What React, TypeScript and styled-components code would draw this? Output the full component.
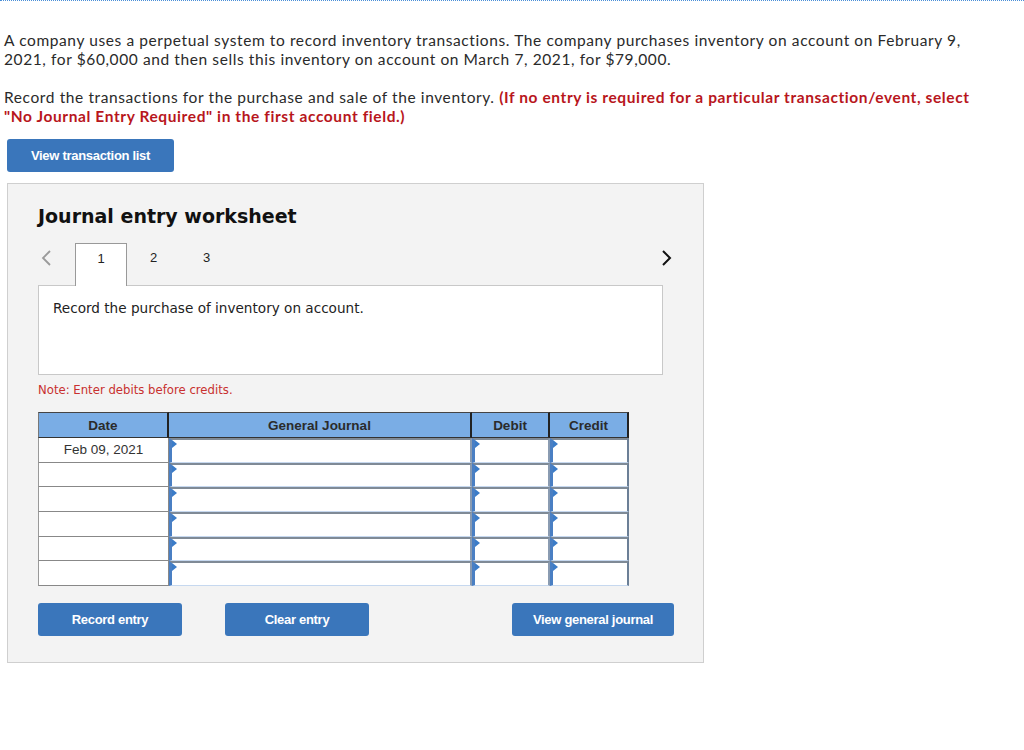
import React from "react";
import styled, { createGlobalStyle } from "styled-components";

const Global = createGlobalStyle`
  html, body { margin: 0; padding: 0; background: #fff; }
  body { font-family: "Liberation Sans", Arial, sans-serif; }
`;

const Page = styled.div`
  border-top: 1px dotted #4a8fd8;
  padding: 30px 4px 0 4px;
  width: 1016px;
`;

const Para = styled.p`
  margin: 0 0 19px 0;
  max-width: 972px;
  font-family: "Lato", "Open Sans", sans-serif;
  font-size: 15.5px;
  line-height: 19px;
  color: #2a2a2a;
  letter-spacing: 0.6px;
`;

const Plain = styled.span``;

const Red = styled.b`
  color: #b8161c;
  font-weight: 700;
`;

const Btn = styled.button<{ $w: number }>`
  width: ${(p) => p.$w}px;
  height: 33px;
  background: #3a76bb;
  color: #fff;
  border: none;
  border-radius: 3px;
  font-family: "Liberation Sans", Arial, sans-serif;
  font-weight: 700;
  font-size: 13px;
  letter-spacing: -0.3px;
  padding: 0;
  cursor: pointer;
`;

const TopBtnWrap = styled.div`
  padding-left: 3px;
  margin-top: -6px;
`;

const Panel = styled.div`
  margin: 11px 0 0 3px;
  width: 697px;
  height: 480px;
  background: #f3f3f3;
  border: 1px solid #cfcfcf;
  padding: 0 30px;
  box-sizing: border-box;
`;

const Title = styled.h2`
  margin: 0;
  padding-top: 20px;
  font-family: "DejaVu Sans", Verdana, sans-serif;
  font-weight: 700;
  font-size: 19px;
  line-height: 24px;
  color: #111;
`;

const TabBar = styled.div`
  display: flex;
  align-items: flex-end;
  margin-top: 15px;
  height: 43px;
  position: relative;
  z-index: 1;
`;

const Arrow = styled.div<{ $right?: boolean }>`
  width: 37px;
  height: 43px;
  box-sizing: border-box;
  display: flex;
  align-items: flex-start;
  padding-top: 6px;
  justify-content: ${(p) => (p.$right ? "flex-end" : "flex-start")};
  padding-left: ${(p) => (p.$right ? 0 : 2)}px;
`;

const Tab = styled.div<{ $active?: boolean }>`
  width: ${(p) => (p.$active ? 52 : 53)}px;
  height: ${(p) => (p.$active ? 43 : 42)}px;
  box-sizing: border-box;
  display: flex;
  justify-content: center;
  padding-top: ${(p) => (p.$active ? 7 : 6)}px;
  font-family: "Liberation Sans", Arial, sans-serif;
  font-size: 13px;
  color: #222;
  background: ${(p) => (p.$active ? "#fff" : "transparent")};
  border: ${(p) => (p.$active ? "1px solid #999" : "none")};
  border-bottom: none;
`;

const Spacer = styled.div`
  flex: 1;
`;

const ContentBox = styled.div`
  margin-top: -1px;
  height: 90px;
  width: 625px;
  box-sizing: border-box;
  background: #fff;
  border: 1px solid #c8c8c8;
  padding: 14px 14px;
  font-family: "DejaVu Sans", Verdana, sans-serif;
  font-size: 13.6px;
  color: #222;
`;

const Note = styled.div`
  margin-top: 8px;
  font-family: "DejaVu Sans", Verdana, sans-serif;
  font-size: 11.7px;
  color: #c8302f;
  line-height: 15px;
`;

const Table = styled.div`
  margin-top: 14px;
  display: grid;
  grid-template-columns: 131px 303px 78px 79px;
  width: 591px;
`;

const Head = styled.div<{ $first?: boolean }>`
  height: 26px;
  box-sizing: border-box;
  background: #7aade5;
  border-top: 1px solid #444;
  border-bottom: 1px solid #333;
  border-left: ${(p) => (p.$first ? "1px solid #777" : "none")};
  border-right: 2px solid #222;
  display: flex;
  align-items: center;
  justify-content: center;
  font-family: "Liberation Sans", Arial, sans-serif;
  font-weight: 700;
  font-size: 13.5px;
  color: #2b2b2b;
`;

const DateCell = styled.div`
  height: 24.7px;
  box-sizing: border-box;
  background: #fff;
  border-left: 1px solid #999;
  border-bottom: 1px solid #888;
  border-right: 1px solid #888;
  display: flex;
  align-items: center;
  justify-content: center;
  font-family: "Liberation Sans", Arial, sans-serif;
  font-size: 13.5px;
  color: #333;
`;

const InputCell = styled.div<{ $last?: boolean }>`
  height: 24.7px;
  box-sizing: border-box;
  background: #fff;
  border-left: 3px solid #4a7fc3;
  border-top: 2px solid #7f8a96;
  border-bottom: 1px solid #c6d8ef;
  border-right: ${(p) => (p.$last ? "2px solid #6b7f96" : "2px solid #8a9bb1")};
  position: relative;
  &::before {
    content: "";
    position: absolute;
    left: 0;
    top: 0;
    border-top: 4px solid transparent;
    border-bottom: 4px solid transparent;
    border-left: 5px solid #3b7cc8;
  }
`;

const Bottom = styled.div`
  display: flex;
  margin-top: 17px;
  width: 636px;
`;

const Gap = styled.div<{ $w: number }>`
  width: ${(p) => p.$w}px;
`;

const Chevron = ({ dir, color, w }: { dir: "l" | "r"; color: string; w: number }) => (
  <svg width="12" height="18" viewBox="0 0 12 18">
    <path
      d={dir === "l" ? "M10 2 L3 9 L10 16" : "M2 2 L9 9 L2 16"}
      fill="none"
      stroke={color}
      strokeWidth={w}
    />
  </svg>
);

export default function App() {
  const rows = [0, 1, 2, 3, 4, 5];
  return (
    <>
      <Global />
      <Page>
        <Para>
          A company uses a perpetual system to record inventory transactions. The company purchases inventory on
          account on February 9, 2021, for $60,000 and then sells this inventory on account on March 7, 2021, for
          $79,000.
        </Para>
        <Para>
          <Plain>Record the transactions for the purchase and sale of the inventory. </Plain>
          <Red>
            (If no entry is required for a particular transaction/event, select "No Journal Entry Required" in the
            first account field.)
          </Red>
        </Para>
        <TopBtnWrap>
          <Btn $w={167}>View transaction list</Btn>
        </TopBtnWrap>
        <Panel>
          <Title>Journal entry worksheet</Title>
          <TabBar>
            <Arrow>
              <Chevron dir="l" color="#9a9a9a" w={1.8} />
            </Arrow>
            <Tab $active>1</Tab>
            <Tab>2</Tab>
            <Tab>3</Tab>
            <Spacer />
            <Arrow $right>
              <Chevron dir="r" color="#111" w={2} />
            </Arrow>
          </TabBar>
          <ContentBox>Record the purchase of inventory on account.</ContentBox>
          <Note>Note: Enter debits before credits.</Note>
          <Table>
            <Head $first>Date</Head>
            <Head>General Journal</Head>
            <Head>Debit</Head>
            <Head>Credit</Head>
            {rows.map((r) => (
              <React.Fragment key={r}>
                <DateCell>{r === 0 ? "Feb 09, 2021" : ""}</DateCell>
                <InputCell />
                <InputCell />
                <InputCell $last />
              </React.Fragment>
            ))}
          </Table>
          <Bottom>
            <Btn $w={144}>Record entry</Btn>
            <Gap $w={43} />
            <Btn $w={144}>Clear entry</Btn>
            <Spacer />
            <Btn $w={162}>View general journal</Btn>
          </Bottom>
        </Panel>
      </Page>
    </>
  );
}
